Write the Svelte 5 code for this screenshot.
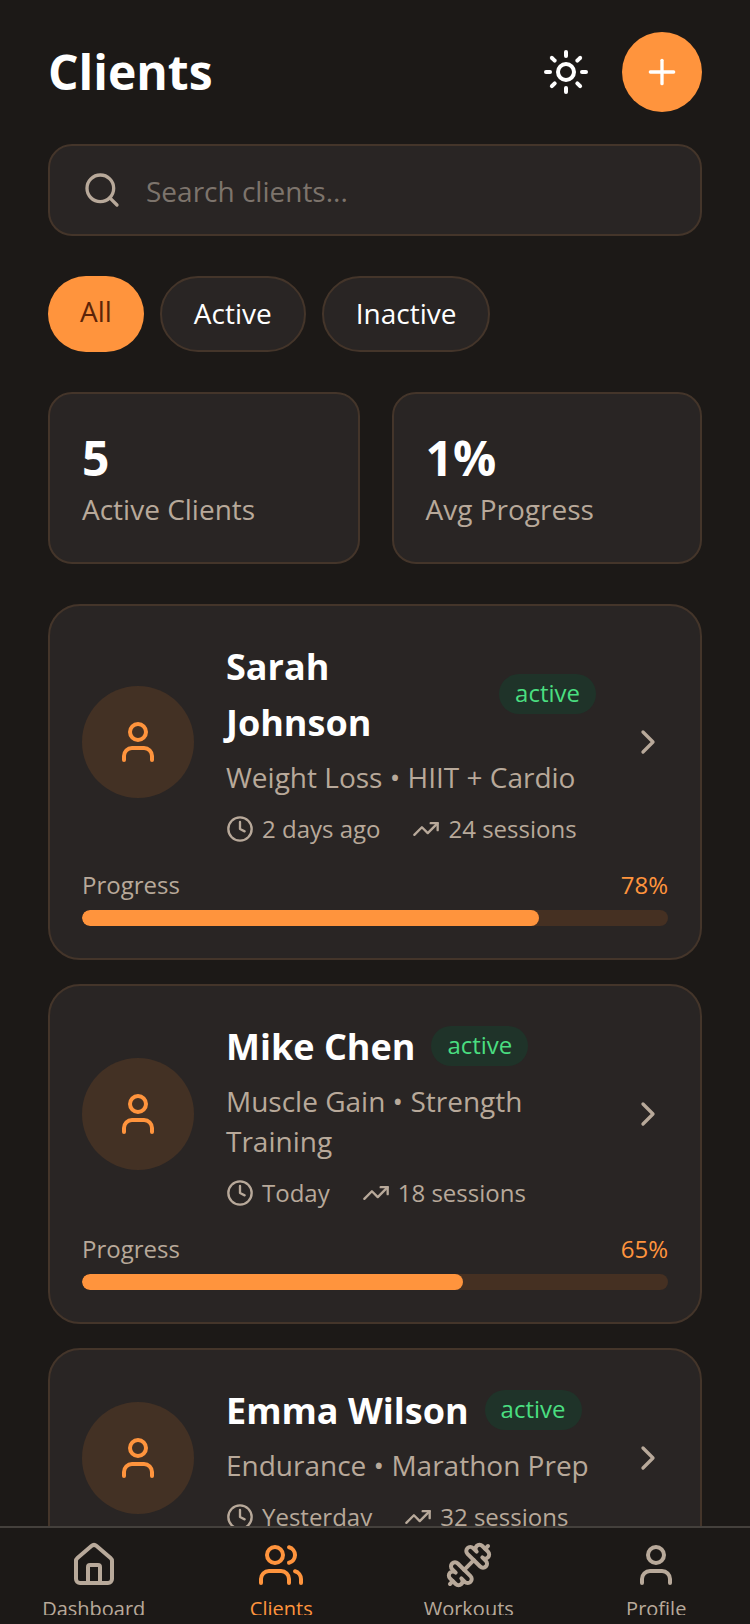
<script>
	const icons = {
		sun: '<circle cx="12" cy="12" r="4"/><path d="M12 2v2"/><path d="M12 20v2"/><path d="m4.93 4.93 1.41 1.41"/><path d="m17.66 17.66 1.41 1.41"/><path d="M2 12h2"/><path d="M20 12h2"/><path d="m6.34 17.66-1.41 1.41"/><path d="m19.07 4.93-1.41 1.41"/>',
		plus: '<path d="M5 12h14"/><path d="M12 5v14"/>',
		search: '<circle cx="11" cy="11" r="8"/><path d="m21 21-4.3-4.3"/>',
		user: '<path d="M19 21v-2a4 4 0 0 0-4-4H9a4 4 0 0 0-4 4v2"/><circle cx="12" cy="7" r="4"/>',
		users: '<path d="M16 21v-2a4 4 0 0 0-4-4H6a4 4 0 0 0-4 4v2"/><circle cx="9" cy="7" r="4"/><path d="M22 21v-2a4 4 0 0 0-3-3.87"/><path d="M16 3.13a4 4 0 0 1 0 7.75"/>',
		chevron: '<path d="m9 18 6-6-6-6"/>',
		clock: '<circle cx="12" cy="12" r="10"/><polyline points="12 6 12 12 16 14"/>',
		trend: '<polyline points="22 7 13.5 15.5 8.5 10.5 2 17"/><polyline points="16 7 22 7 22 13"/>',
		house: '<path d="M15 21v-8a1 1 0 0 0-1-1h-4a1 1 0 0 0-1 1v8"/><path d="M3 10a2 2 0 0 1 .709-1.528l7-5.999a2 2 0 0 1 2.582 0l7 5.999A2 2 0 0 1 21 10v9a2 2 0 0 1-2 2H5a2 2 0 0 1-2-2z"/>',
		dumbbell: '<g transform="rotate(90 12 12)"><path d="M14.4 14.4 9.6 9.6"/><path d="M18.657 21.485a2 2 0 1 1-2.829-2.828l-1.767 1.768a2 2 0 1 1-2.829-2.829l6.364-6.364a2 2 0 1 1 2.829 2.829l-1.768 1.767a2 2 0 1 1 2.828 2.829z"/><path d="m21.5 21.5-1.4-1.4"/><path d="M3.9 3.9 2.5 2.5"/><path d="M6.404 12.768a2 2 0 1 1-2.829-2.829l1.768-1.767a2 2 0 1 1-2.828-2.829l2.828-2.828a2 2 0 1 1 2.829 2.828l1.767-1.768a2 2 0 1 1 2.829 2.829z"/></g>'
	};

	const filters = ['All', 'Active', 'Inactive'];
	const stats = [
		{ value: '5', label: 'Active Clients' },
		{ value: '1%', label: 'Avg Progress' }
	];
	const clients = [
		{ name: 'Sarah Johnson', goal: 'Weight Loss • HIIT + Cardio', last: '2 days ago', sessions: 24, progress: 78 },
		{ name: 'Mike Chen', goal: 'Muscle Gain • Strength Training', last: 'Today', sessions: 18, progress: 65 },
		{ name: 'Emma Wilson', goal: 'Endurance • Marathon Prep', last: 'Yesterday', sessions: 32, progress: 92 }
	];
	const tabs = [
		{ label: 'Dashboard', icon: 'house' },
		{ label: 'Clients', icon: 'users', active: true },
		{ label: 'Workouts', icon: 'dumbbell' },
		{ label: 'Profile', icon: 'user' }
	];
</script>

{#snippet icon(name, size, cls)}
	<svg class={cls} width={size} height={size} viewBox="0 0 24 24" fill="none" stroke="currentColor" stroke-width="2" stroke-linecap="round" stroke-linejoin="round">
		{@html icons[name]}
	</svg>
{/snippet}

<div class="screen">
	<main class="content">
		<header class="header">
			<h1>Clients</h1>
			<div class="header-actions">
				<button class="theme-btn">{@render icon('sun', 48)}</button>
				<button class="add-btn">{@render icon('plus', 40)}</button>
			</div>
		</header>

		<div class="search">
			{@render icon('search', 40, 'search-icon')}
			<input class="search-input" placeholder="Search clients..." />
		</div>

		<div class="filters">
			{#each filters as filter, i}
				<button class="chip" class:selected={i === 0}>{filter}</button>
			{/each}
		</div>

		<div class="stats">
			{#each stats as stat}
				<div class="stat">
					<div class="stat-value">{stat.value}</div>
					<div class="stat-label">{stat.label}</div>
				</div>
			{/each}
		</div>

		<div class="clients">
			{#each clients as client}
				<article class="card">
					<div class="card-top">
						<div class="avatar">{@render icon('user', 48)}</div>
						<div class="info">
							<div class="name-row">
								<h2>{client.name}</h2>
								<span class="badge">active</span>
							</div>
							<p class="goal">{client.goal}</p>
							<div class="meta">
								<span class="meta-item">{@render icon('clock', 28)}{client.last}</span>
								<span class="meta-item">{@render icon('trend', 28)}{client.sessions} sessions</span>
							</div>
						</div>
						{@render icon('chevron', 40, 'chevron')}
					</div>
					<div class="progress-head">
						<span>Progress</span>
						<span class="percent">{client.progress}%</span>
					</div>
					<div class="track">
						<div class="fill" style="width: {client.progress}%"></div>
					</div>
				</article>
			{/each}
		</div>
	</main>

	<nav class="tabbar">
		{#each tabs as tab}
			<button class="tab" class:current={tab.active}>
				{@render icon(tab.icon, 48, 'tab-icon')}
				<span>{tab.label}</span>
			</button>
		{/each}
	</nav>
</div>

<style>
	:global(body) {
		background: #1c1917;
	}

	.screen {
		height: 1624px;
		display: flex;
		flex-direction: column;
		overflow: hidden;
		background: #1c1917;
		color: #fff;
		font-family: 'Open Sans', 'Noto Sans', sans-serif;
	}

	button {
		font-family: inherit;
		cursor: pointer;
	}

	.content {
		flex: 1;
		min-height: 0;
		overflow: hidden;
		padding: 32px 48px 0;
	}

	.header {
		display: flex;
		align-items: center;
		justify-content: space-between;
		margin-bottom: 32px;
	}

	h1 {
		margin: 0;
		font-size: 48px;
		line-height: 72px;
		font-weight: 700;
	}

	.header-actions {
		display: flex;
		align-items: center;
		gap: 32px;
	}

	.theme-btn {
		display: flex;
		padding: 0;
		border: 0;
		background: none;
		color: #fff;
	}

	.add-btn {
		width: 80px;
		height: 80px;
		display: flex;
		align-items: center;
		justify-content: center;
		padding: 0;
		border: 0;
		border-radius: 50%;
		background: #ff943d;
		color: #fff;
	}

	.search {
		height: 92px;
		box-sizing: border-box;
		display: flex;
		align-items: center;
		gap: 24px;
		padding: 0 32px;
		background: #292524;
		border: 2px solid #44352a;
		border-radius: 24px;
		margin-bottom: 40px;
	}

	.search :global(.search-icon) {
		color: #b8a99a;
		flex-shrink: 0;
	}

	.search-input {
		flex: 1;
		min-width: 0;
		padding: 2px 0 0;
		border: 0;
		outline: 0;
		background: none;
		color: #fff;
		font-family: inherit;
		font-size: 28px;
		line-height: 40px;
	}

	.search-input::placeholder {
		color: #7d746c;
		opacity: 1;
	}

	.filters {
		display: flex;
		gap: 16px;
		margin-bottom: 40px;
	}

	.chip {
		padding: 15px 32px 17px;
		border: 2px solid #44352a;
		border-radius: 9999px;
		background: #292524;
		color: #fff;
		font-size: 28px;
		line-height: 40px;
	}

	.chip.selected {
		border: 0;
		background: #ff943d;
		color: #5c2408;
		align-self: stretch;
		display: flex;
	}

	.stats {
		display: grid;
		grid-template-columns: 311.5fr 310.5fr;
		gap: 32px;
		margin-bottom: 40px;
	}

	.stat {
		padding: 32px;
		background: #292524;
		border: 2px solid #44352a;
		border-radius: 24px;
	}

	.stat-value {
		font-size: 48px;
		line-height: 64px;
		font-weight: 700;
	}

	.stat-label {
		margin-top: -1px;
		padding-bottom: 1px;
		font-size: 28px;
		line-height: 40px;
		color: #b8a99a;
	}

	.clients {
		display: flex;
		flex-direction: column;
		gap: 24px;
	}

	.card {
		flex-shrink: 0;
		padding: 32px;
		background: #292524;
		border: 2px solid #44352a;
		border-radius: 32px;
	}

	.card-top {
		display: flex;
		align-items: center;
		gap: 32px;
		margin-bottom: 20px;
	}

	.avatar {
		width: 112px;
		height: 112px;
		flex-shrink: 0;
		display: flex;
		align-items: center;
		justify-content: center;
		border-radius: 50%;
		background: #433124;
		color: #ff943d;
	}

	.info {
		flex: 1;
		min-width: 0;
	}

	.name-row {
		display: flex;
		align-items: center;
		gap: 16px;
		margin-bottom: 8px;
	}

	h2 {
		margin: 0 0 -1px;
		padding-top: 1px;
		font-size: 36px;
		line-height: 56px;
		font-weight: 700;
	}

	.badge {
		flex-shrink: 0;
		padding: 1px 16px 3px;
		border-radius: 9999px;
		background: #1f3329;
		color: #4ade80;
		font-size: 24px;
		line-height: 36px;
	}

	.goal {
		margin: -1px 0 16px;
		font-size: 28px;
		line-height: 40px;
		color: #b8a99a;
	}

	.meta {
		display: flex;
		gap: 32px;
		padding-bottom: 1px;
		font-size: 24px;
		line-height: 32px;
		color: #b8a99a;
	}

	.meta-item {
		display: flex;
		align-items: center;
		gap: 8px;
		white-space: nowrap;
	}

	.card-top :global(.chevron) {
		flex-shrink: 0;
		color: #b8a99a;
	}

	.progress-head {
		display: flex;
		justify-content: space-between;
		padding-top: 1px;
		margin-bottom: 7px;
		font-size: 24px;
		line-height: 36px;
		color: #b8a99a;
	}

	.percent {
		color: #ff943d;
	}

	.track {
		height: 16px;
		border-radius: 9999px;
		background: #453022;
		overflow: hidden;
	}

	.fill {
		height: 100%;
		border-radius: 9999px;
		background: #ff943d;
	}

	.tabbar {
		flex-shrink: 0;
		height: 98px;
		box-sizing: border-box;
		display: grid;
		grid-template-columns: repeat(4, 1fr);
		padding-top: 13px;
		background: #1c1917;
		border-top: 2px solid #44403c;
	}

	.tab {
		height: 74px;
		overflow: hidden;
		display: flex;
		flex-direction: column;
		align-items: center;
		gap: 6px;
		padding: 0;
		border: 0;
		background: none;
		color: #b8a99a;
		font-size: 20px;
		line-height: 28px;
	}

	.tab :global(.tab-icon) {
		flex-shrink: 0;
	}

	.tab.current {
		color: #ff943d;
	}
</style>
